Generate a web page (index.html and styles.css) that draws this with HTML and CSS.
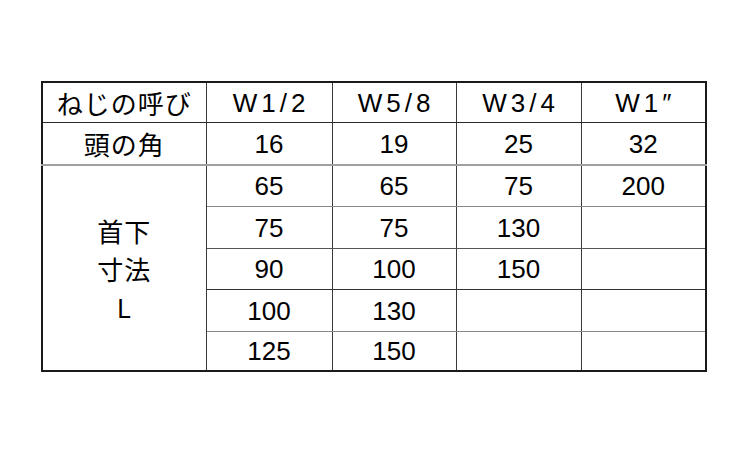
FILE: index.html
```html
<!DOCTYPE html>
<html lang="ja">
<head>
<meta charset="utf-8">
<link rel="stylesheet" href="styles.css">
</head>
<body>
<div class="page">
<table class="spec">
  <colgroup>
    <col class="c-label">
    <col class="c1">
    <col class="c2">
    <col class="c3">
    <col class="c4">
  </colgroup>
  <tr class="r-head">
    <td class="label">ねじの呼び</td>
    <td class="hd">W1/2</td>
    <td class="hd">W5/8</td>
    <td class="hd">W3/4</td>
    <td class="hd">W1″</td>
  </tr>
  <tr class="r-angle">
    <td class="label">頭の角</td>
    <td>16</td><td>19</td><td>25</td><td>32</td>
  </tr>
  <tr class="r-a">
    <td class="label merged" rowspan="5">首下<br>寸法<br>L</td>
    <td>65</td><td>65</td><td>75</td><td>200</td>
  </tr>
  <tr class="r-b">
    <td>75</td><td>75</td><td>130</td><td></td>
  </tr>
  <tr class="r-c">
    <td>90</td><td>100</td><td>150</td><td></td>
  </tr>
  <tr class="r-d">
    <td>100</td><td>130</td><td></td><td></td>
  </tr>
  <tr class="r-e">
    <td>125</td><td>150</td><td></td><td></td>
  </tr>
</table>
</div>
</body>
</html>
```

FILE: styles.css
```css
html, body {
  margin: 0;
  padding: 0;
  background: #ffffff;
}

.page {
  padding: 81px 0 0 41px;
}

.spec {
  border-collapse: collapse;
  table-layout: fixed;
  width: 664px;
  border: 2px solid #1a1a1a;
  font-family: "Liberation Sans", "Noto Sans CJK JP", sans-serif;
  font-size: 26px;
  color: #000000;
}

.c-label { width: 164px; }
.c1 { width: 126px; }
.c2 { width: 124px; }
.c3 { width: 125px; }
.c4 { width: 125px; }

.spec td {
  padding: 0;
  text-align: center;
  vertical-align: middle;
  border-left: 1px solid #3a3a3a;
  border-right: 1px solid #3a3a3a;
  border-top: 1px solid #888888;
  border-bottom: 1px solid #888888;
  line-height: 1;
}

.spec td.label {
  font-family: "Noto Sans CJK JP", sans-serif;
  font-size: 26px;
  letter-spacing: 1px;
}

.spec td.hd {
  letter-spacing: 4px;
  text-indent: 4px;
}

.spec td.merged {
  line-height: 38px;
  padding-top: 2px;
}

.r-head td { height: 39px; border-bottom: 1px solid #2a2a2a; }
.r-angle td { height: 41px; border-bottom: 2px solid #a0a0a0; }
.r-a td { height: 40px; }
.r-b td { height: 41px; border-bottom-color: #555555; }
.r-c td { height: 40px; border-bottom-color: #333333; }
.r-d td { height: 41px; }
.r-e td { height: 38px; }
.spec .r-a td.merged { border-bottom: 2px solid #1a1a1a; }
```
